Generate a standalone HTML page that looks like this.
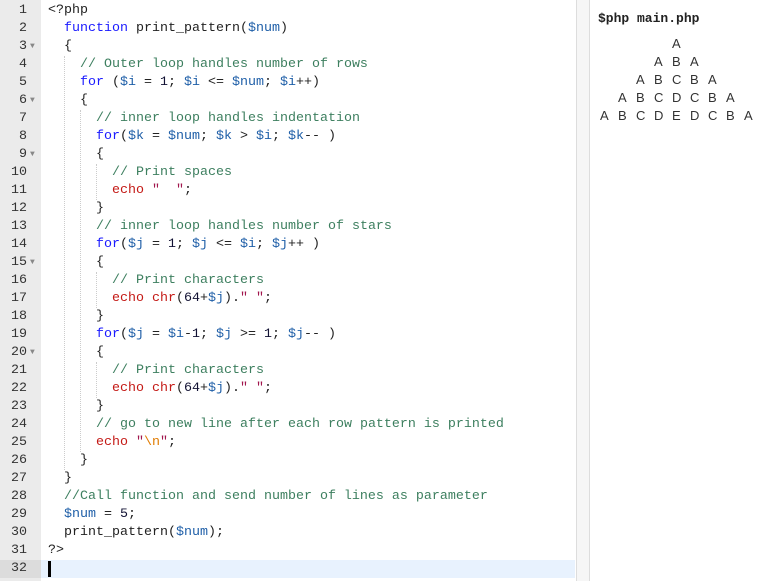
<!DOCTYPE html>
<html><head><meta charset="utf-8"><style>
body{margin:0;width:765px;height:581px;background:#fff;position:relative;overflow:hidden;font-family:"Liberation Mono",monospace;font-size:13.33px}
.gut{position:absolute;left:0;top:0;width:41px;height:581px;background:#ebebeb}
.ln{position:absolute;left:0;width:27px;text-align:right;color:#333;height:18px;line-height:18px}
.fd{position:absolute;left:30px;color:#888;font-size:8px;line-height:18px}
.cl{position:absolute;left:48px;white-space:pre;height:18px;line-height:18px;color:#222}
.g{position:absolute;width:0;border-left:1px dotted #ccc}
.k{color:#1a1aff}.v{color:#1f5fa8}.c{color:#3d7f5f}.e{color:#c41a16}.s{color:#a1154c}.n{color:#113}
.out{position:absolute;font-family:"Liberation Sans",sans-serif;font-size:13px;color:#333;height:18px;line-height:18px}
.out span{display:inline-block;width:18px}
</style></head><body>
<div class="gut"></div>
<div style="position:absolute;left:41px;top:560px;width:534px;height:18px;background:#e8f2fe"></div>
<div style="position:absolute;left:0;top:560px;width:41px;height:18px;background:#dcdcdc"></div>
<div style="position:absolute;left:576px;top:0;width:1px;height:581px;background:#ddd"></div>
<div style="position:absolute;left:577px;top:0;width:12px;height:581px;background:#f6f6f6"></div>
<div style="position:absolute;left:589px;top:0;width:1px;height:581px;background:#ddd"></div>
<div style="position:absolute;left:48px;top:561px;width:3px;height:16px;background:#000"></div>

<div class="g" style="left:64px;top:56px;height:414px"></div>
<div class="g" style="left:80px;top:110px;height:342px"></div>
<div class="g" style="left:96px;top:164px;height:36px"></div>
<div class="g" style="left:96px;top:272px;height:36px"></div>
<div class="g" style="left:96px;top:362px;height:36px"></div>

<div id="nums"></div>
<div class="cl" style="top:2px">&lt;?php</div>
<div class="cl" style="top:20px">  <span class="k">function</span> print_pattern(<span class="v">$num</span>)</div>
<div class="cl" style="top:38px">  {</div>
<div class="cl" style="top:56px">    <span class="c">// Outer loop handles number of rows</span></div>
<div class="cl" style="top:74px">    <span class="k">for</span> (<span class="v">$i</span> = <span class="n">1</span>; <span class="v">$i</span> &lt;= <span class="v">$num</span>; <span class="v">$i</span>++)</div>
<div class="cl" style="top:92px">    {</div>
<div class="cl" style="top:110px">      <span class="c">// inner loop handles indentation</span></div>
<div class="cl" style="top:128px">      <span class="k">for</span>(<span class="v">$k</span> = <span class="v">$num</span>; <span class="v">$k</span> &gt; <span class="v">$i</span>; <span class="v">$k</span>-- )</div>
<div class="cl" style="top:146px">      {</div>
<div class="cl" style="top:164px">        <span class="c">// Print spaces</span></div>
<div class="cl" style="top:182px">        <span class="e">echo</span> <span class="s">"  "</span>;</div>
<div class="cl" style="top:200px">      }</div>
<div class="cl" style="top:218px">      <span class="c">// inner loop handles number of stars</span></div>
<div class="cl" style="top:236px">      <span class="k">for</span>(<span class="v">$j</span> = <span class="n">1</span>; <span class="v">$j</span> &lt;= <span class="v">$i</span>; <span class="v">$j</span>++ )</div>
<div class="cl" style="top:254px">      {</div>
<div class="cl" style="top:272px">        <span class="c">// Print characters</span></div>
<div class="cl" style="top:290px">        <span class="e">echo</span> <span class="e">chr</span>(<span class="n">64</span>+<span class="v">$j</span>).<span class="s">" "</span>;</div>
<div class="cl" style="top:308px">      }</div>
<div class="cl" style="top:326px">      <span class="k">for</span>(<span class="v">$j</span> = <span class="v">$i</span>-<span class="n">1</span>; <span class="v">$j</span> &gt;= <span class="n">1</span>; <span class="v">$j</span>-- )</div>
<div class="cl" style="top:344px">      {</div>
<div class="cl" style="top:362px">        <span class="c">// Print characters</span></div>
<div class="cl" style="top:380px">        <span class="e">echo</span> <span class="e">chr</span>(<span class="n">64</span>+<span class="v">$j</span>).<span class="s">" "</span>;</div>
<div class="cl" style="top:398px">      }</div>
<div class="cl" style="top:416px">      <span class="c">// go to new line after each row pattern is printed</span></div>
<div class="cl" style="top:434px">      <span class="e">echo</span> <span class="s">"<span style="color:#e07b00">\n</span>"</span>;</div>
<div class="cl" style="top:452px">    }</div>
<div class="cl" style="top:470px">  }</div>
<div class="cl" style="top:488px">  <span class="c">//Call function and send number of lines as parameter</span></div>
<div class="cl" style="top:506px">  <span class="v">$num</span> = <span class="n">5</span>;</div>
<div class="cl" style="top:524px">  print_pattern(<span class="v">$num</span>);</div>
<div class="cl" style="top:542px">?&gt;</div>

<div class="ln" style="top:2px">1</div><div class="ln" style="top:20px">2</div><div class="ln" style="top:38px">3</div><div class="ln" style="top:56px">4</div><div class="ln" style="top:74px">5</div><div class="ln" style="top:92px">6</div><div class="ln" style="top:110px">7</div><div class="ln" style="top:128px">8</div><div class="ln" style="top:146px">9</div><div class="ln" style="top:164px">10</div><div class="ln" style="top:182px">11</div><div class="ln" style="top:200px">12</div><div class="ln" style="top:218px">13</div><div class="ln" style="top:236px">14</div><div class="ln" style="top:254px">15</div><div class="ln" style="top:272px">16</div><div class="ln" style="top:290px">17</div><div class="ln" style="top:308px">18</div><div class="ln" style="top:326px">19</div><div class="ln" style="top:344px">20</div><div class="ln" style="top:362px">21</div><div class="ln" style="top:380px">22</div><div class="ln" style="top:398px">23</div><div class="ln" style="top:416px">24</div><div class="ln" style="top:434px">25</div><div class="ln" style="top:452px">26</div><div class="ln" style="top:470px">27</div><div class="ln" style="top:488px">28</div><div class="ln" style="top:506px">29</div><div class="ln" style="top:524px">30</div><div class="ln" style="top:542px">31</div><div class="ln" style="top:560px">32</div>
<div class="fd" style="top:38px">▼</div><div class="fd" style="top:92px">▼</div><div class="fd" style="top:146px">▼</div><div class="fd" style="top:254px">▼</div><div class="fd" style="top:344px">▼</div>

<div style="position:absolute;left:598px;top:11px;font-family:'Liberation Mono',monospace;font-weight:bold;font-size:13px;color:#222">$php main.php</div>
<div class="out" style="left:672px;top:35px"><span>A</span></div>
<div class="out" style="left:654px;top:53px"><span>A</span><span>B</span><span>A</span></div>
<div class="out" style="left:636px;top:71px"><span>A</span><span>B</span><span>C</span><span>B</span><span>A</span></div>
<div class="out" style="left:618px;top:89px"><span>A</span><span>B</span><span>C</span><span>D</span><span>C</span><span>B</span><span>A</span></div>
<div class="out" style="left:600px;top:107px"><span>A</span><span>B</span><span>C</span><span>D</span><span>E</span><span>D</span><span>C</span><span>B</span><span>A</span></div>
</body></html>
